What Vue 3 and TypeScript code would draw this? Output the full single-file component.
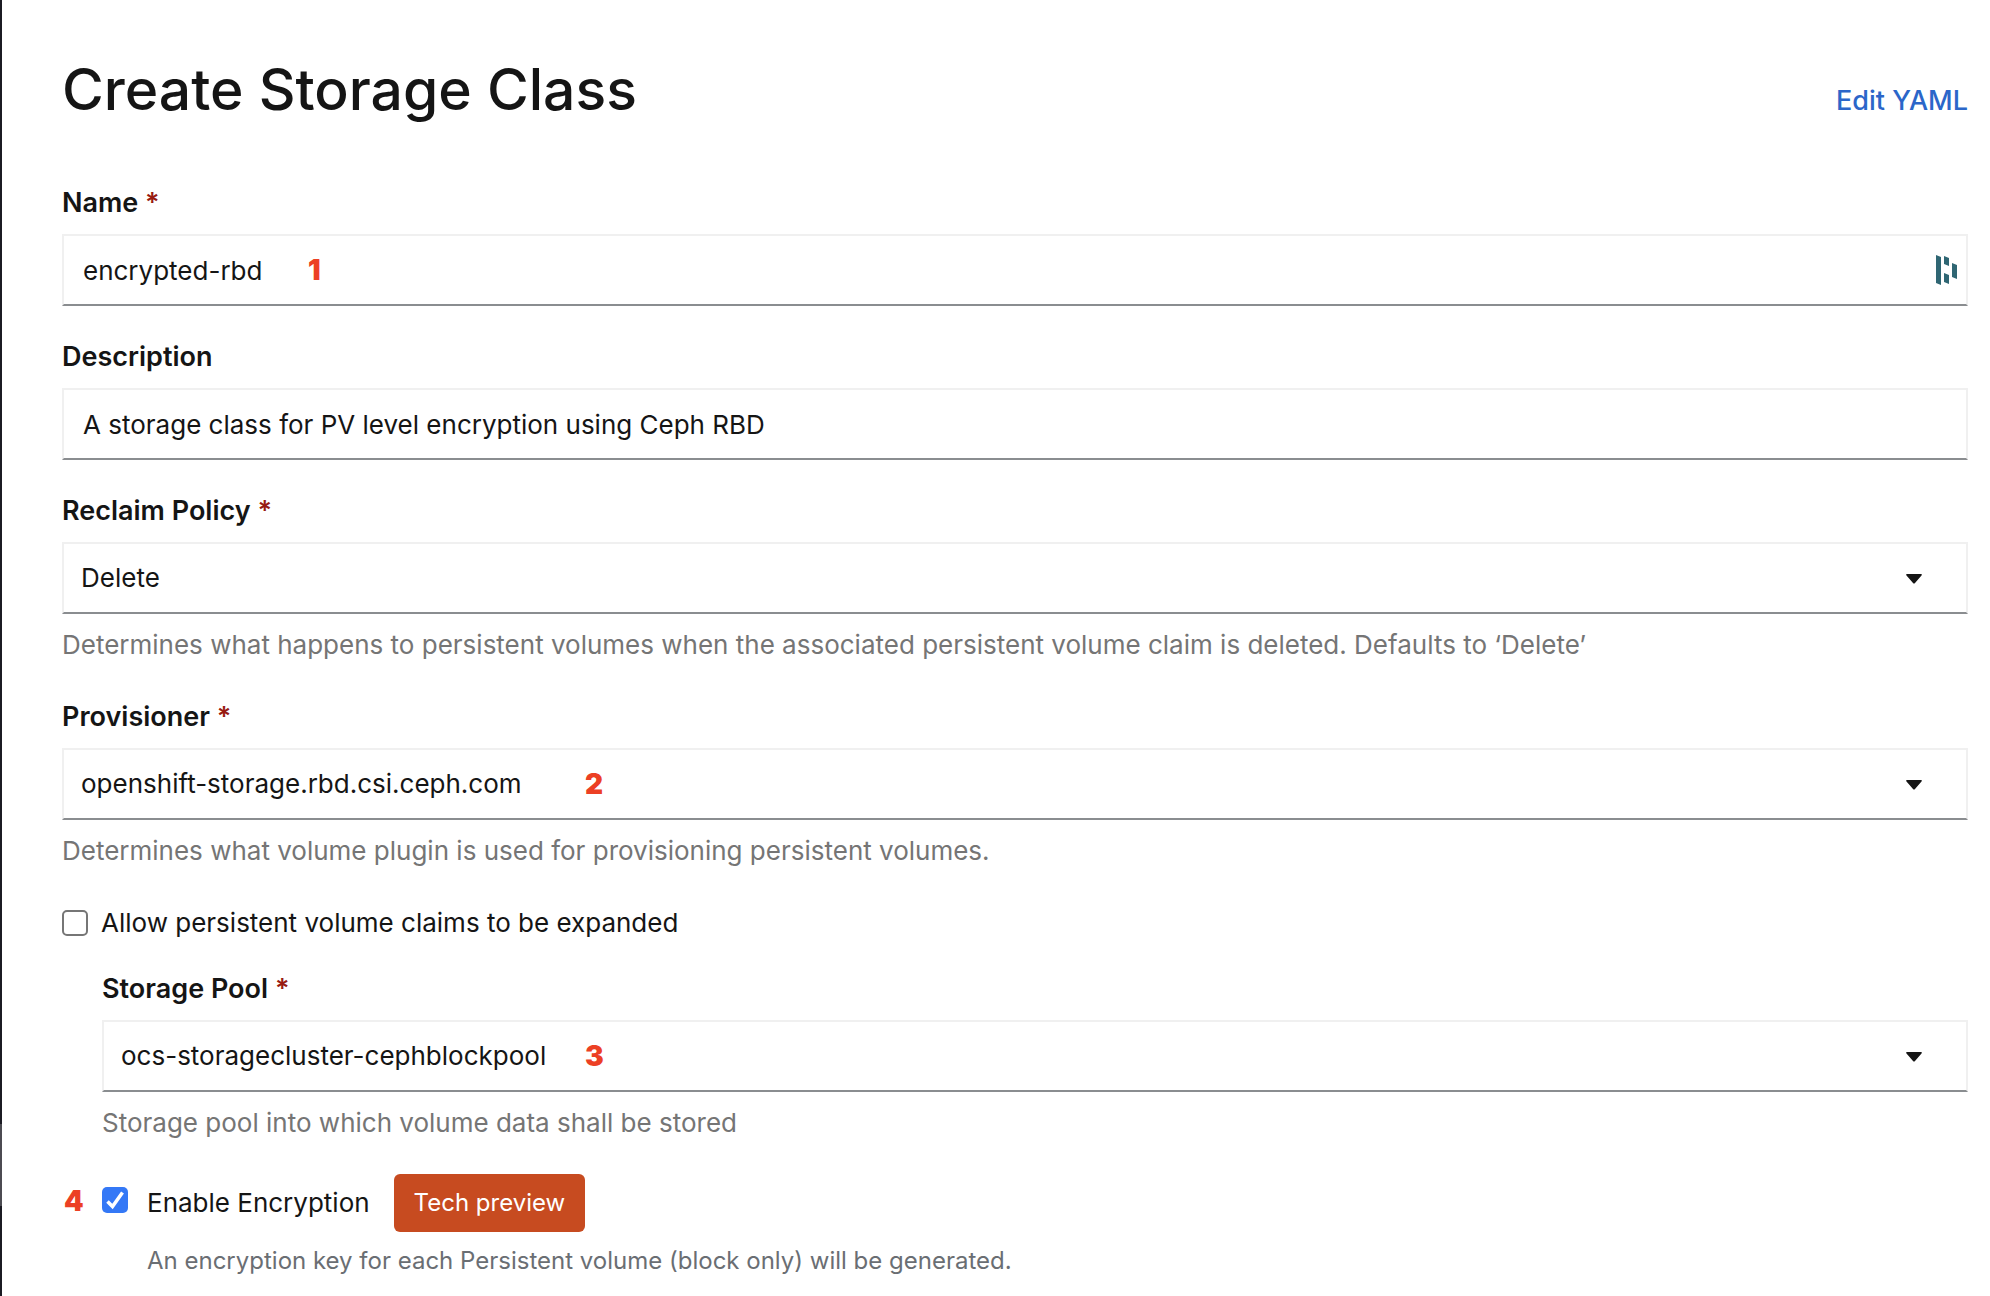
<script setup lang="ts">
import { ref } from 'vue'

interface SelectField {
  id: string
  label: string
  options: string[]
  help: string
  marker?: string
}

const name = ref<string>('encrypted-rbd')
const description = ref<string>('A storage class for PV level encryption using Ceph RBD')
const expandable = ref<boolean>(false)
const encrypted = ref<boolean>(true)

const selects: SelectField[] = [
  {
    id: 'reclaim-policy',
    label: 'Reclaim Policy',
    options: ['Delete'],
    help: 'Determines what happens to persistent volumes when the associated persistent volume claim is deleted. Defaults to ‘Delete’',
  },
  {
    id: 'provisioner',
    label: 'Provisioner',
    options: ['openshift-storage.rbd.csi.ceph.com'],
    help: 'Determines what volume plugin is used for provisioning persistent volumes.',
    marker: '2',
  },
]

const pool: SelectField = {
  id: 'storage-pool',
  label: 'Storage Pool',
  options: ['ocs-storagecluster-cephblockpool'],
  help: 'Storage pool into which volume data shall be stored',
  marker: '3',
}
</script>

<template>
  <main class="page">
    <header class="header">
      <h1 class="title">Create Storage Class</h1>
      <a class="yaml-link" href="#yaml">Edit YAML</a>
    </header>

    <form class="form" @submit.prevent>
      <div class="field">
        <label class="label" for="name">Name <span class="required">*</span></label>
        <div class="control">
          <input id="name" v-model="name" class="box" type="text" />
          <span class="marker marker-name">1</span>
          <svg class="vault-icon" viewBox="0 0 21 30" aria-hidden="true">
            <path d="M0 0l5 2v28l-5-2zM8 1l5 2v8l-5-2zM8 18l5 2v9l-5-2zM16 8l5 2v14l-5-2z" />
          </svg>
        </div>
      </div>

      <div class="field">
        <label class="label" for="description">Description</label>
        <div class="control">
          <input id="description" v-model="description" class="box" type="text" />
        </div>
      </div>

      <div v-for="field in selects" :key="field.id" class="field">
        <label class="label" :for="field.id">{{ field.label }} <span class="required">*</span></label>
        <div class="control">
          <select :id="field.id" class="box">
            <option v-for="option in field.options" :key="option">{{ option }}</option>
          </select>
          <span v-if="field.marker" class="marker marker-select">{{ field.marker }}</span>
          <svg class="caret" viewBox="0 0 16 10" aria-hidden="true">
            <path d="M1 0h14q1.500 .5 .5 1.500L9 9q-1 1-2 0L.5 1.500Q-.5.5 1 0z" />
          </svg>
        </div>
        <p class="help">{{ field.help }}</p>
      </div>

      <div class="check-row">
        <input id="expandable" v-model="expandable" class="check" type="checkbox" />
        <label for="expandable">Allow persistent volume claims to be expanded</label>
      </div>

      <div class="nested">
        <div class="field">
          <label class="label" :for="pool.id">{{ pool.label }} <span class="required">*</span></label>
          <div class="control">
            <select :id="pool.id" class="box">
              <option v-for="option in pool.options" :key="option">{{ option }}</option>
            </select>
            <span class="marker marker-pool">{{ pool.marker }}</span>
            <svg class="caret" viewBox="0 0 16 10" aria-hidden="true">
              <path d="M1 0h14q1.500 .5 .5 1.500L9 9q-1 1-2 0L.5 1.500Q-.5.5 1 0z" />
            </svg>
          </div>
          <p class="help">{{ pool.help }}</p>
        </div>

        <div class="encryption">
          <span class="marker marker-check">4</span>
          <input id="encryption" v-model="encrypted" class="check" type="checkbox" />
          <label class="encryption-label" for="encryption">Enable Encryption</label>
          <span class="badge">Tech preview</span>
        </div>
        <p class="encryption-help">An encryption key for each Persistent volume (block only) will be generated.</p>
      </div>
    </form>
  </main>
</template>

<style>
body {
  margin: 0;
  background: #fff;
}
</style>

<style scoped>
.page {
  box-sizing: border-box;
  min-height: 100vh;
  padding: 52px 22px 14px 62px;
  background: linear-gradient(#1b1b23 0 1124px, #4c4b52 1124px 1206px, #1b1b23 1206px) left / 2px 100% no-repeat #fff;
  color: #151515;
  font-family: Inter, "Liberation Sans", sans-serif;
  font-size: 26px;
  line-height: 42px;
}

.header {
  display: flex;
  align-items: center;
  justify-content: space-between;
  margin-bottom: 54px;
}

.title {
  margin: 0;
  font-size: 57px;
  font-weight: 500;
  line-height: 76px;
}

.yaml-link {
  margin-top: 22px;
  color: #2b66c9;
  font-size: 27px;
  font-weight: 500;
  text-decoration: none;
}

.field {
  margin-bottom: 30px;
}

.label {
  display: block;
  margin-bottom: 10px;
  font-size: 27px;
  font-weight: 600;
}

.required {
  color: #981b12;
}

.control {
  position: relative;
}

.box {
  display: block;
  box-sizing: border-box;
  width: 100%;
  height: 72px;
  margin: 0;
  padding: 0 19px;
  border: 2px solid #f0f0f0;
  border-bottom-color: #8a8d90;
  border-radius: 0;
  outline: none;
  appearance: none;
  background: transparent;
  color: inherit;
  font: inherit;
}

select.box {
  padding: 0 80px 0 17px;
}

.caret {
  position: absolute;
  top: 32px;
  right: 46px;
  width: 16px;
  height: 10px;
  fill: #151515;
}

.vault-icon {
  position: absolute;
  top: 21px;
  right: 11px;
  width: 21px;
  height: 30px;
  fill: #2f6673;
}

.marker {
  position: absolute;
  color: #ec4024;
  font-size: 28px;
  font-weight: 900;
  line-height: 42px;
  pointer-events: none;
}

.control .marker {
  top: 15px;
}

.marker-name {
  left: 246px;
}

.marker-select {
  left: 523px;
}

.marker-pool {
  left: 483px;
}

.marker-check {
  top: 6px;
  left: -38px;
}

.help,
.encryption-help {
  margin: 10px 0 0;
  color: #757575;
}

.check-row {
  display: flex;
  align-items: center;
  gap: 13px;
  margin-bottom: 24px;
}

.check {
  box-sizing: border-box;
  flex: none;
  width: 26px;
  height: 26px;
  margin: 0;
  border: 2px solid #767676;
  border-radius: 5px;
  appearance: none;
  background: #fff;
}

.check:checked {
  border: 0;
  background: #3478f6 url("data:image/svg+xml,%3Csvg xmlns='http://www.w3.org/2000/svg' viewBox='0 0 26 26'%3E%3Cpath d='M5.500 14.500l5 5 10-14' fill='none' stroke='white' stroke-width='3.500'/%3E%3C/svg%3E") center / 26px 26px;
}

.nested {
  margin-left: 40px;
}

.encryption {
  position: relative;
  display: flex;
  align-items: center;
}

.encryption .check {
  margin-bottom: 6px;
}

.encryption-label {
  margin: 0 24px 0 19px;
}

.badge {
  padding: 8px 20px;
  border-radius: 6px;
  background: #c74b20;
  color: #fff;
  font-size: 24px;
}

.encryption-help {
  margin: 8px 0 0 45px;
  color: #6a6e73;
  font-size: 24px;
}
</style>
